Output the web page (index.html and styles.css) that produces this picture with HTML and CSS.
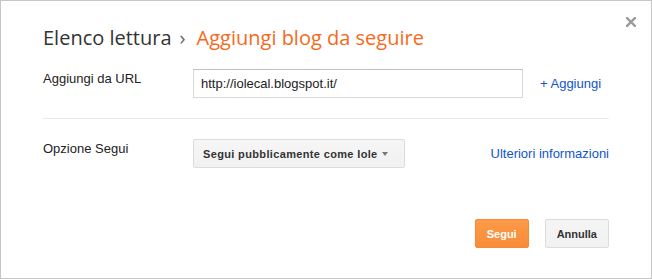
FILE: index.html
```html
<!DOCTYPE html>
<html lang="it">
<head>
<meta charset="utf-8">
<title>Aggiungi blog da seguire</title>
<link rel="stylesheet" href="styles.css">
</head>
<body>
<div class="dialog">
  <button class="close" aria-label="Chiudi">
    <svg width="10" height="10" viewBox="0 0 10 10"><path d="M1 1L9 9M9 1L1 9" stroke="#9a9a9a" stroke-width="2.4" stroke-linecap="square"/></svg>
  </button>
  <h1 class="title"><span class="crumb">Elenco lettura</span><span class="sep">›</span><span class="current">Aggiungi blog da seguire</span></h1>
  <div class="row">
    <label class="label" for="url">Aggiungi da URL</label>
    <input id="url" class="url" type="text" value="http://iolecal.blogspot.it/">
    <a class="link add" href="#">+ Aggiungi</a>
  </div>
  <div class="divider"></div>
  <div class="row">
    <span class="label">Opzione Segui</span>
    <div class="menu-btn"><span>Segui pubblicamente come Iole</span><span class="caret"></span></div>
    <a class="link more" href="#">Ulteriori informazioni</a>
  </div>
  <div class="actions">
    <button class="btn primary">Segui</button>
    <button class="btn">Annulla</button>
  </div>
</div>
</body>
</html>
```

FILE: styles.css
```css
html, body {
  margin: 0;
  padding: 0;
  background: #fff;
}

.dialog {
  position: relative;
  box-sizing: border-box;
  width: 652px;
  height: 279px;
  border: 1px solid #c6c6c6;
  padding: 25px 42px 0 42px;
  font-family: Arial, "Liberation Sans", sans-serif;
  font-size: 13px;
  color: #222;
}

.close {
  position: absolute;
  top: 16px;
  right: 15px;
  width: 10px;
  height: 10px;
  padding: 0;
  border: 0;
  background: none;
  display: flex;
}

.title {
  margin: 0;
  font-family: "Open Sans", sans-serif;
  font-weight: 400;
  font-size: 20px;
  line-height: 24px;
  display: flex;
}

.crumb {
  color: #333;
}

.sep {
  color: #666;
  padding: 0 11px 0 8px;
}

.current {
  color: #f7691c;
}

.row {
  display: flex;
  align-items: flex-start;
  margin-top: 19px;
}

.divider + .row {
  margin-top: 20px;
}

.label {
  width: 150px;
  flex: none;
  padding-top: 2px;
  line-height: 16px;
  color: #222;
}

.url {
  box-sizing: border-box;
  width: 330px;
  height: 29px;
  margin: 0;
  padding: 0 7px;
  border: 1px solid #d9d9d9;
  border-top-color: #c0c0c0;
  font-family: Arial, "Liberation Sans", sans-serif;
  font-size: 13px;
  color: #222;
  outline: none;
}

.link {
  align-self: center;
  color: #15c;
  text-decoration: none;
  line-height: 16px;
}

.add {
  margin-left: 17px;
}

.more {
  margin-left: auto;
}

.divider {
  height: 1px;
  background: #ebebeb;
  margin-top: 20px;
}

.menu-btn {
  box-sizing: border-box;
  width: 212px;
  height: 29px;
  display: flex;
  align-items: center;
  padding: 0 16px 0 9px;
  border: 1px solid #dcdcdc;
  border-radius: 2px;
  background: linear-gradient(#f6f6f6, #f1f1f1);
  font-size: 11px;
  font-weight: bold;
  color: #333;
  letter-spacing: 0.35px;
}

.caret {
  margin-left: auto;
  width: 0;
  height: 0;
  border-top: 4px solid #777;
  border-left: 3.5px solid transparent;
  border-right: 3.5px solid transparent;
}

.actions {
  display: flex;
  justify-content: flex-end;
  gap: 16px;
  margin-top: 51px;
}

.btn {
  box-sizing: border-box;
  height: 29px;
  padding: 0 11px;
  border: 1px solid #dcdcdc;
  border-radius: 2px;
  background: linear-gradient(#f5f5f5, #f1f1f1);
  font-family: Arial, "Liberation Sans", sans-serif;
  font-size: 11px;
  font-weight: bold;
  color: #333;
}

.primary {
  border-color: #f5883a;
  background: linear-gradient(#fd9b48, #f88b38);
  color: #fff;
}
```
